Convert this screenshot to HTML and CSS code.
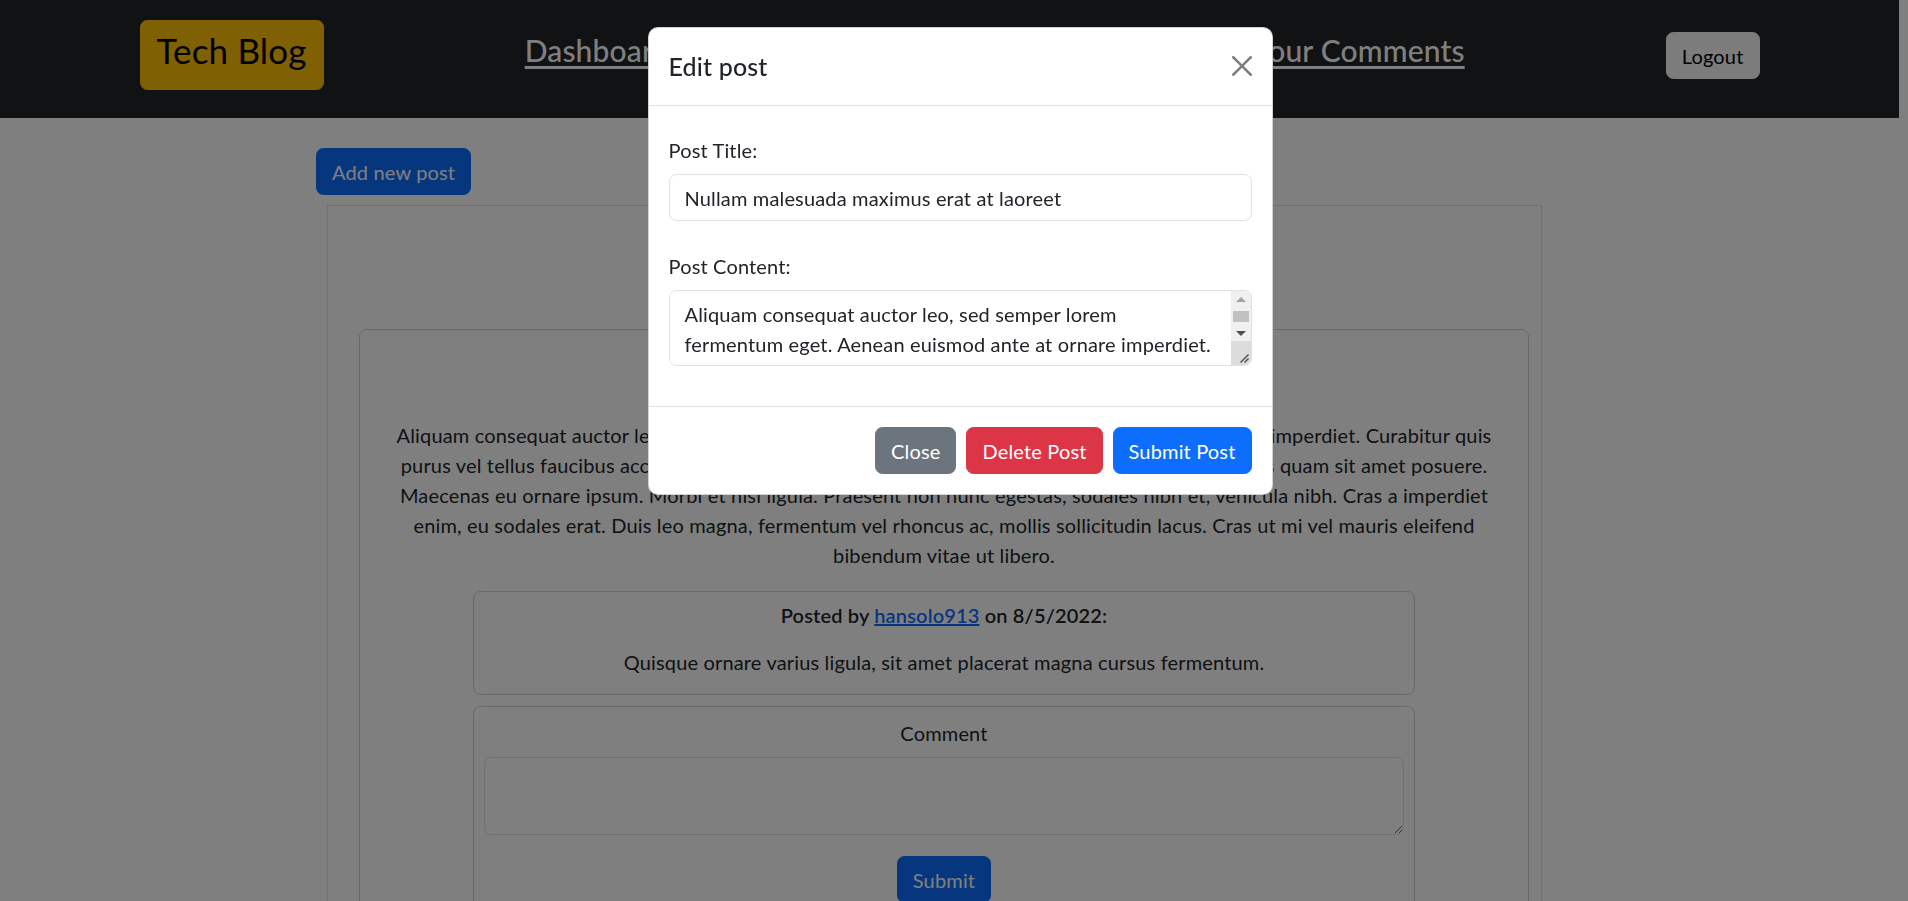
FILE: index.html
```html
<!DOCTYPE html>
<html lang="en">
<head>
<meta charset="utf-8">
<title>Tech Blog - Dashboard</title>
<link rel="stylesheet" href="styles.css">
</head>
<body class="modal-open">
<header class="navbar">
  <div class="nav-container">
    <a class="brand" href="#">Tech Blog</a>
    <nav class="nav-links">
      <a href="#">Dashboard</a>
      <a href="#">Home</a>
      <a href="#">Your Comments</a>
    </nav>
    <button class="btn btn-light logout" type="button">Logout</button>
  </div>
</header>

<main class="main">
  <button class="btn btn-primary add-btn" type="button">Add new post</button>
  <section class="posts-panel">
    <h2 class="panel-title">Your Posts</h2>
    <article class="post-card">
      <h3 class="post-title">Nullam malesuada</h3>
      <p class="post-body">Aliquam consequat auctor leo, sed semper lorem fermentum eget. Aenean euismod ante at ornare imperdiet. Curabitur quis<br>purus vel tellus faucibus accumsan. Donec eget risus vel nunc tincidunt gravida, in tempor ex. Quis quam sit amet posuere.<br>Maecenas eu ornare ipsum. Morbi et nisi ligula. Praesent non nunc egestas, sodales nibh et, vehicula nibh. Cras a imperdiet<br>enim, eu sodales erat. Duis leo magna, fermentum vel rhoncus ac, mollis sollicitudin lacus. Cras ut mi vel mauris eleifend<br>bibendum vitae ut libero.</p>
      <div class="comment-card">
        <p class="comment-meta">Posted by <a href="#">hansolo913</a> on 8/5/2022:</p>
        <p class="comment-text">Quisque ornare varius ligula, sit amet placerat magna cursus fermentum.</p>
      </div>
      <form class="comment-form">
        <label class="comment-label" for="comment">Comment</label>
        <textarea id="comment" class="form-control comment-input" rows="2"></textarea>
        <button class="btn btn-primary submit-btn" type="button">Submit</button>
      </form>
    </article>
  </section>
</main>

<div class="modal-backdrop"></div>
<div class="modal">
  <div class="modal-dialog">
    <div class="modal-header">
      <h5 class="modal-title">Edit post</h5>
      <button class="btn-close" type="button" aria-label="Close">
        <svg viewBox="0 0 16 16" width="20" height="20"><path d="M.293.293a1 1 0 0 1 1.414 0L8 6.586 14.293.293a1 1 0 1 1 1.414 1.414L9.414 8l6.293 6.293a1 1 0 0 1-1.414 1.414L8 9.414l-6.293 6.293a1 1 0 0 1-1.414-1.414L6.586 8 .293 1.707a1 1 0 0 1 0-1.414z" fill="#000"/></svg>
      </button>
    </div>
    <div class="modal-body">
      <div class="form-group">
        <label class="form-label" for="post-title">Post Title:</label>
        <input id="post-title" class="form-control" type="text" value="Nullam malesuada maximus erat at laoreet">
      </div>
      <div class="form-group">
        <label class="form-label" for="post-content">Post Content:</label>
        <div class="content-field">
          <textarea id="post-content" class="content-input" rows="2">Aliquam consequat auctor leo, sed semper lorem fermentum eget. Aenean euismod ante at ornare imperdiet. Curabitur quis purus vel tellus faucibus accumsan. Donec eget risus vel nunc tincidunt gravida, in tempor ex. Quis quam sit amet posuere. Maecenas eu ornare ipsum. Morbi et nisi ligula. Praesent non nunc egestas, sodales nibh et, vehicula nibh. Cras a imperdiet enim, eu sodales erat. Duis leo magna, fermentum vel rhoncus ac, mollis sollicitudin lacus. Cras ut mi vel mauris eleifend bibendum vitae ut libero.</textarea>
          <div class="fake-scroll" aria-hidden="true">
            <span class="sb-btn sb-up"></span>
            <span class="sb-track"><span class="sb-thumb"></span></span>
            <span class="sb-btn sb-down"></span>
            <span class="sb-resizer">
              <svg width="12" height="12" viewBox="0 0 12 12"><path d="M11.5 3.5 L3.5 11.5 M11.5 7.5 L7.5 11.5" stroke="#4a4a4a" stroke-width="1.3" fill="none"/></svg>
            </span>
          </div>
        </div>
      </div>
    </div>
    <div class="modal-footer">
      <button class="btn btn-secondary" type="button">Close</button>
      <button class="btn btn-danger" type="button">Delete Post</button>
      <button class="btn btn-primary" type="button">Submit Post</button>
    </div>
  </div>
</div>
</body>
</html>
```

FILE: styles.css
```css
* { box-sizing: border-box; }

html, body {
  margin: 0;
  height: 100%;
  overflow: hidden;
}

body {
  font-family: "Segoe UI", Lato, "Noto Sans", sans-serif;
  font-size: 20px;
  line-height: 1.5;
  letter-spacing: 0.16px;
  color: #212529;
  background: #fff;
  padding-right: 9px;
}

/* ---------- buttons ---------- */
.btn {
  display: inline-block;
  font-family: inherit;
  font-size: 20px;
  line-height: 30px;
  letter-spacing: inherit;
  padding: 7.5px 15px;
  border: 1px solid transparent;
  border-radius: 7.5px;
  cursor: pointer;
  color: #fff;
}
.btn-primary { background: #0d6efd; border-color: #0d6efd; }
.btn-secondary { background: #6c757d; border-color: #6c757d; }
.btn-danger { background: #dc3545; border-color: #dc3545; }
.btn-light { background: #f8f9fa; border-color: #f8f9fa; color: #000; }

/* ---------- navbar ---------- */
.navbar {
  background: #212529;
  height: 118px;
  padding-top: 20px;
}
.nav-container {
  max-width: 1650px;
  margin: 0 auto;
  padding: 0 15px;
  display: flex;
  align-items: flex-start;
}
.brand {
  display: block;
  background: #ffc107;
  color: #000;
  text-decoration: none;
  font-size: 35px;
  line-height: 42px;
  padding: 9px 17px 19px;
  border-radius: 7.5px;
}
.nav-links {
  flex: 1;
  display: flex;
  justify-content: center;
  gap: 251px;
  margin-top: 12px;
}
.nav-links a {
  color: #fff;
  font-size: 30px;
  line-height: 36px;
  font-weight: 500;
  text-decoration: underline;
  text-underline-offset: 4px;
}
.logout {
  margin-top: 12px;
}

/* ---------- main ---------- */
.main {
  padding: 30px 0 0 316px;
}
.add-btn { display: block; }
.posts-panel {
  margin: 10px 0 0 11px;
  width: 1215px;
  border: 1px solid #dee2e6;
  padding: 20px 12px 40px 31px;
}
.panel-title {
  margin: 0 0 55px;
  text-align: center;
  font-size: 40px;
  line-height: 48px;
  font-weight: 500;
}
.post-card {
  border: 1px solid rgba(0, 0, 0, 0.175);
  border-radius: 7.5px;
  padding: 20px 20px 30px;
  text-align: center;
}
.post-title {
  margin: 0 0 40px;
  font-size: 25px;
  line-height: 30px;
  font-weight: 500;
}
.post-body {
  margin: 0 0 21px;
}
.comment-card,
.comment-form {
  width: 942px;
  margin: 0 auto;
  border: 1px solid rgba(0, 0, 0, 0.175);
  border-radius: 7.5px;
}
.comment-card {
  padding: 8px 10px 17px;
}
.comment-meta {
  margin: 0 0 17px;
  font-weight: 600;
}
.comment-meta a { color: #0d6efd; }
.comment-text { margin: 0; }
.comment-form {
  margin-top: 11px;
  padding: 11px 10px 20px;
  display: flex;
  flex-direction: column;
  align-items: center;
}
.comment-label { margin-bottom: 9px; }
.form-control {
  display: block;
  width: 100%;
  font-family: inherit;
  font-size: 20px;
  line-height: 30px;
  letter-spacing: inherit;
  color: #212529;
  padding: 7.5px 15px;
  border: 1px solid #dee2e6;
  border-radius: 7.5px;
  background: #fff;
}
.comment-input { height: 78px; resize: vertical; }
.submit-btn { margin-top: 21px; }

/* ---------- modal ---------- */
.modal-backdrop {
  position: fixed;
  inset: 0;
  background: rgba(0, 0, 0, 0.5);
}
.modal {
  position: fixed;
  inset: 0;
  display: flex;
  justify-content: center;
  align-items: flex-start;
  padding: 27px 0 0 12px;
}
.modal-dialog {
  width: 625px;
  background: #fff;
  border: 1px solid rgba(0, 0, 0, 0.175);
  border-radius: 10px;
}
.modal-header {
  display: flex;
  align-items: center;
  justify-content: space-between;
  padding: 19px 20px 20px;
  border-bottom: 1px solid #dee2e6;
}
.modal-title {
  margin: 0;
  font-size: 25px;
  line-height: 38px;
  font-weight: 500;
}
.btn-close {
  display: flex;
  align-items: center;
  justify-content: center;
  width: 30px;
  height: 30px;
  padding: 0;
  margin-right: -5px;
  border: 0;
  background: transparent;
  opacity: 0.5;
  cursor: pointer;
}
.modal-body {
  padding: 29px 20px 10px;
}
.form-group { margin-bottom: 30px; }
.form-label {
  display: block;
  margin-bottom: 9px;
}

/* textarea with its scrollbar column */
.content-field {
  display: flex;
  height: 76px;
  border: 1px solid #dee2e6;
  border-radius: 7.5px;
  overflow: hidden;
  background: #fff;
}
.content-input {
  flex: 1;
  min-width: 0;
  height: 74px;
  margin: 0;
  border: 0;
  outline: none;
  resize: none;
  overflow: hidden;
  font-family: inherit;
  font-size: 20px;
  line-height: 30px;
  letter-spacing: inherit;
  color: #212529;
  padding: 7.5px 18px 7.5px 15px;
  background: #fff;
}
.fake-scroll {
  width: 20px;
  display: flex;
  flex-direction: column;
  background: #f0f0f0;
}
.sb-btn {
  height: 17px;
  display: flex;
  align-items: center;
  justify-content: center;
}
.sb-btn::before {
  content: "";
  border-left: 5px solid transparent;
  border-right: 5px solid transparent;
}
.sb-up::before { border-bottom: 5px solid #a3a3a3; }
.sb-down { height: 16px; }
.sb-down::before { border-top: 5px solid #505050; }
.sb-track {
  height: 17px;
  padding: 3px 2px 3px;
}
.sb-thumb {
  display: block;
  height: 11px;
  background: #c1c1c1;
}
.sb-resizer {
  flex: 1;
  display: flex;
  align-items: flex-end;
  justify-content: flex-end;
  background: #dcdcdc;
  padding: 0 2px 2px 0;
}
.sb-resizer svg { display: block; }

.modal-footer {
  display: flex;
  justify-content: flex-end;
  gap: 10px;
  padding: 20px;
  border-top: 1px solid #dee2e6;
}
```
